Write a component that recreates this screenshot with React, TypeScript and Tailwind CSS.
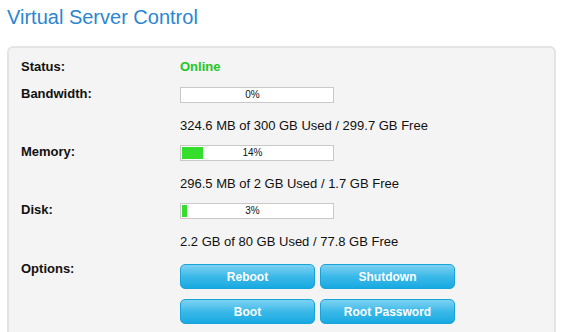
const stats = [
  {
    label: "Bandwidth:",
    pct: 0,
    usage: "324.6 MB of 300 GB Used / 299.7 GB Free",
  },
  {
    label: "Memory:",
    pct: 14,
    usage: "296.5 MB of 2 GB Used / 1.7 GB Free",
  },
  {
    label: "Disk:",
    pct: 3,
    usage: "2.2 GB of 80 GB Used / 77.8 GB Free",
  },
];

function Bar({ pct }: { pct: number }) {
  return (
    <div className="relative h-[16px] w-[154px] border border-[#c9c9c9] bg-white p-px">
      {pct > 0 && (
        <div className="h-full bg-[#35dd2c]" style={{ width: `${pct}%` }} />
      )}
      <span className="absolute inset-0 flex items-center justify-center pr-[9px] text-[10px] leading-none text-[#111]">
        {pct}%
      </span>
    </div>
  );
}

function Btn({ children }: { children: string }) {
  return (
    <button className="h-[25px] w-[135px] rounded-[5px] border border-[#1aa3d9] bg-gradient-to-b from-[#7ad2f2] via-[#3ab9e8] to-[#14aae2] text-[12px] font-bold text-white">
      {children}
    </button>
  );
}

export default function App() {
  return (
    <div className="min-h-[332px] bg-white font-['Liberation_Sans',Arial,sans-serif] text-[#111]">
      {/* Title */}
      <h1 className="pl-[7px] pt-[5px] text-[20px] leading-[24px] text-[#2a86d1]">
        Virtual Server Control
      </h1>

      {/* Panel */}
      <div className="ml-[7px] mt-[17px] w-[549px] rounded-[6px] border-2 border-[#e4e4e4] bg-[#f4f4f4] pb-[14px] pl-[12px] pt-[9px]">
        <div className="flex h-[20px] items-center">
          <div className="w-[159px] text-[13px] font-bold">Status:</div>
          <div className="text-[13px] font-bold text-[#22c71f]">Online</div>
        </div>

        {stats.map((s, i) => (
          <div key={s.label} className={i === 0 ? "mt-[10px]" : "mt-[12px]"}>
            <div className="flex items-start">
              <div className="w-[159px] text-[13px] font-bold leading-[13px]">
                {s.label}
              </div>
              <Bar pct={s.pct} />
            </div>
            <div className="mt-[15px] pl-[159px] text-[13px] leading-[15px]">
              {s.usage}
            </div>
          </div>
        ))}

        {/* Options */}
        <div className="mt-[15px] flex items-start">
          <div className="w-[159px] text-[13px] font-bold leading-[10px]">
            Options:
          </div>
          <div className="grid grid-cols-[135px_135px] gap-x-[5px] gap-y-[10px]">
            <Btn>Reboot</Btn>
            <Btn>Shutdown</Btn>
            <Btn>Boot</Btn>
            <Btn>Root Password</Btn>
          </div>
        </div>
      </div>
    </div>
  );
}
